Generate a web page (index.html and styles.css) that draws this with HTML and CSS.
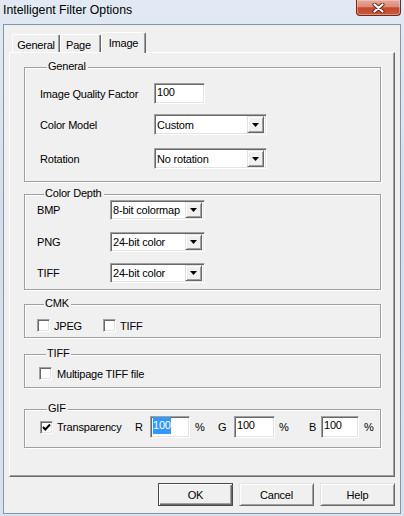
FILE: index.html
```html
<!DOCTYPE html>
<html lang="en">
<head>
  <meta charset="UTF-8" />
  <title>Intelligent Filter Options</title>
  <link rel="stylesheet" href="styles.css">
</head>
<body>
  <div class="window">
    <div class="titlebar">
      <span class="title">Intelligent Filter Options</span>
      <div class="close" aria-label="Close">
        <svg width="13" height="10" viewBox="0 0 13 10">
          <path d="M2.5 1.5 L10.5 8.5 M10.5 1.5 L2.5 8.5" stroke="#5a2418" stroke-width="4" stroke-linecap="round" fill="none"/>
          <path d="M2.5 1.5 L10.5 8.5 M10.5 1.5 L2.5 8.5" stroke="#fff" stroke-width="2.2" stroke-linecap="round" fill="none"/>
        </svg>
      </div>
    </div>

    <div class="client">
      <div class="tabs">
        <div class="tab tab-general">General</div>
        <div class="tab tab-page">Page</div>
        <div class="tab tab-image active">Image</div>
      </div>

      <div class="panel">
        <!-- General -->
        <div class="group g-general">
          <span class="group-title">General</span>
          <div class="row r-quality">
            <span class="lbl">Image Quality Factor</span>
            <div class="field w-quality"><span>100</span></div>
          </div>
          <div class="row r-model">
            <span class="lbl">Color Model</span>
            <div class="field select w-model">
              <span>Custom</span>
              <span class="drop"><svg width="7" height="4" viewBox="0 0 7 4"><path d="M0 0H7L3.5 4Z" fill="#000"/></svg></span>
            </div>
          </div>
          <div class="row r-rotation">
            <span class="lbl">Rotation</span>
            <div class="field select w-model">
              <span>No rotation</span>
              <span class="drop"><svg width="7" height="4" viewBox="0 0 7 4"><path d="M0 0H7L3.5 4Z" fill="#000"/></svg></span>
            </div>
          </div>
        </div>

        <!-- Color Depth -->
        <div class="group g-depth">
          <span class="group-title">Color Depth</span>
          <div class="row r-bmp">
            <span class="lbl">BMP</span>
            <div class="field select w-depth">
              <span>8-bit colormap</span>
              <span class="drop"><svg width="7" height="4" viewBox="0 0 7 4"><path d="M0 0H7L3.5 4Z" fill="#000"/></svg></span>
            </div>
          </div>
          <div class="row r-png">
            <span class="lbl">PNG</span>
            <div class="field select w-depth">
              <span>24-bit color</span>
              <span class="drop"><svg width="7" height="4" viewBox="0 0 7 4"><path d="M0 0H7L3.5 4Z" fill="#000"/></svg></span>
            </div>
          </div>
          <div class="row r-tiff">
            <span class="lbl">TIFF</span>
            <div class="field select w-depth">
              <span>24-bit color</span>
              <span class="drop"><svg width="7" height="4" viewBox="0 0 7 4"><path d="M0 0H7L3.5 4Z" fill="#000"/></svg></span>
            </div>
          </div>
        </div>

        <!-- CMK -->
        <div class="group g-cmk">
          <span class="group-title">CMK</span>
          <div class="row r-check">
            <label class="check-item jpeg"><span class="box"></span>JPEG</label>
            <label class="check-item"><span class="box"></span>TIFF</label>
          </div>
        </div>

        <!-- TIFF -->
        <div class="group g-tiff">
          <span class="group-title">TIFF</span>
          <div class="row r-check">
            <label class="check-item"><span class="box"></span>Multipage TIFF file</label>
          </div>
        </div>

        <!-- GIF -->
        <div class="group g-gif">
          <span class="group-title">GIF</span>
          <div class="row r-gif">
            <label class="check-item transp">
              <span class="box"><svg width="9" height="9" viewBox="0 0 9 9"><path d="M1 4 L3.3 6.5 L8 1.5" stroke="#000" stroke-width="2" fill="none"/></svg></span>Transparency
            </label>
            <span class="chan ch-r">R</span>
            <div class="field w-r"><span class="sel">100</span></div>
            <span class="pct p-r">%</span>
            <span class="chan ch-g">G</span>
            <div class="field w-g"><span>100</span></div>
            <span class="pct p-g">%</span>
            <span class="chan ch-b">B</span>
            <div class="field w-b"><span>100</span></div>
            <span class="pct p-b">%</span>
          </div>
        </div>
      </div>

      <div class="actions">
        <button class="btn default">OK</button>
        <button class="btn">Cancel</button>
        <button class="btn">Help</button>
      </div>
    </div>
  </div>
</body>
</html>
```

FILE: styles.css
```css
/* Base */
* {
  box-sizing: border-box;
}
body {
  margin: 0;
  width: 404px;
  height: 516px;
  overflow: hidden;
  font-family: 'Liberation Sans', Arial, sans-serif;
  font-size: 11px;
  letter-spacing: -0.2px;
  color: #000;
}

/* Window frame */
.window {
  width: 404px;
  height: 516px;
  padding: 0 3px 2px 3px;
  display: flex;
  flex-direction: column;
  background: linear-gradient(to bottom, #e1eaf4, #d3dfec 40%, #d7e2ee);
}
.titlebar {
  height: 24px;
  flex-shrink: 0;
  display: flex;
  justify-content: space-between;
  align-items: flex-start;
}
.title {
  font-size: 12.3px;
  line-height: 12px;
  letter-spacing: 0;
  margin-top: 4px;
  color: #000;
}
.close {
  width: 45px;
  height: 16px;
  border: 1px solid #6b2a1e;
  border-top: none;
  border-radius: 0 0 4px 4px;
  background: linear-gradient(to bottom, #e6a79a 0%, #d98c79 45%, #c4492c 52%, #c9573b 100%);
  box-shadow: inset 0 0 0 1px rgba(255, 220, 210, 0.45);
  display: flex;
  justify-content: center;
  align-items: center;
}

/* Client area */
.client {
  flex: 1;
  background: #f0f0f0;
  border: 1px solid #8795a6;
  padding: 7px 5px 0 5px;
  display: flex;
  flex-direction: column;
}

/* Tabs */
.tabs {
  height: 20px;
  flex-shrink: 0;
  display: flex;
  align-items: flex-end;
  padding-left: 3px;
  position: relative;
  z-index: 1;
}
.tab {
  height: 18px;
  border-top: 1px solid #fff;
  border-left: 1px solid #fff;
  border-right: 1px solid #696969;
  box-shadow: inset -1px 0 #a0a0a0;
  border-radius: 2px 2px 0 0;
  background: #f0f0f0;
  display: flex;
  justify-content: center;
  align-items: center;
  padding-top: 3px;
}
.tab-general { width: 48px; }
.tab-page { width: 41px; justify-content: flex-start; padding-left: 5px; }
.tab-image { width: 45px; }
.tab.active {
  height: 21px;
  margin-bottom: -1px;
  padding-top: 0;
}

/* Tab page */
.panel {
  height: 425px;
  flex-shrink: 0;
  border-top: 1px solid #fff;
  border-left: 1px solid #fff;
  border-right: 1px solid #696969;
  border-bottom: 1px solid #696969;
  box-shadow: inset -1px -1px #a0a0a0;
  padding: 0 13px 0 14px;
}

/* Group boxes */
.group {
  border: 1px solid #a0a0a0;
  box-shadow: inset 1px 1px #fff, 1px 1px #fff;
  display: flex;
  flex-direction: column;
}
.group-title {
  display: block;
  width: fit-content;
  margin: -8px 0 -2px 7px;
  padding: 0 2px 0 1px;
  line-height: 13px;
  background: #f0f0f0;
}
.g-general { margin-top: 14px; padding: 0 0 12px 15px; }
.g-depth { margin-top: 12px; padding: 0 0 6px 12px; }
.g-cmk { margin-top: 14px; padding: 0 0 4px 12px; }
.g-tiff { margin-top: 16px; padding: 0 0 6px 14px; }
.g-gif { margin-top: 21px; padding: 0 0 9px 15px; }

.row {
  display: flex;
  align-items: center;
}
.g-general .lbl { width: 114px; }
.g-depth .lbl { width: 73px; }

.r-quality { margin-top: 12px; }
.r-model { margin-top: 10px; }
.r-rotation { margin-top: 13px; }
.r-bmp { margin-top: 2px; }
.r-png { margin-top: 12px; }
.r-tiff { margin-top: 11px; }
.g-cmk .r-check { margin-top: 10px; height: 15px; }
.g-tiff .r-check { margin-top: 8px; height: 15px; }
.r-gif { margin-top: 3px; height: 22px; }

/* Sunken fields */
.field {
  height: 21px;
  background: #fff;
  border-top: 1px solid #a0a0a0;
  border-left: 1px solid #a0a0a0;
  border-bottom: 1px solid #fff;
  border-right: 1px solid #fff;
  box-shadow: inset 1px 1px #696969, inset -1px -1px #e3e3e3;
  padding: 1px 2px 0 2px;
  line-height: 14px;
  display: flex;
}
.field.select {
  align-items: center;
  padding: 0 2px 0 2px;
}
.w-quality { width: 51px; }
.w-model { width: 113px; }
.w-depth { width: 95px; height: 20px; }

.drop {
  margin-left: auto;
  width: 17px;
  height: 17px;
  background: #f0f0f0;
  border-top: 1px solid #e3e3e3;
  border-left: 1px solid #e3e3e3;
  border-right: 1px solid #696969;
  border-bottom: 1px solid #696969;
  box-shadow: inset 1px 1px #fff, inset -1px -1px #a0a0a0;
  display: flex;
  justify-content: center;
  align-items: center;
}
.w-depth .drop { height: 16px; }

/* Checkboxes */
.check-item {
  display: flex;
  align-items: center;
}
.box {
  width: 13px;
  height: 13px;
  margin-right: 4px;
  background: #fff;
  border-top: 1px solid #a0a0a0;
  border-left: 1px solid #a0a0a0;
  border-bottom: 1px solid #fff;
  border-right: 1px solid #fff;
  box-shadow: inset 1px 1px #696969, inset -1px -1px #e3e3e3;
  display: flex;
  justify-content: center;
  align-items: center;
}
.jpeg { width: 66px; }
.g-tiff .box { margin-right: 5px; }
.transp { width: 95px; }

/* GIF transparency colour */
.chan { display: block; }
.ch-r { width: 15px; }
.ch-g { width: 16px; }
.ch-b { width: 12px; }
.w-r { width: 40px; height: 22px; }
.w-g { width: 41px; height: 22px; }
.w-b { width: 38px; height: 22px; }
.pct { display: block; }
.p-r { margin-left: 5px; width: 23px; }
.p-g { margin-left: 4px; width: 30px; }
.p-b { margin-left: 5px; }
.sel {
  background: #3399ff;
  color: #fff;
  height: 17px;
  padding-top: 1px;
  margin-top: -1px;
}

/* Dialog buttons */
.actions {
  display: flex;
  justify-content: flex-end;
  gap: 6px;
  margin-top: 6px;
}
.btn {
  width: 75px;
  height: 23px;
  font-family: inherit;
  font-size: 11px;
  letter-spacing: inherit;
  color: #000;
  background: #f0f0f0;
  border-top: 1px solid #e3e3e3;
  border-left: 1px solid #e3e3e3;
  border-right: 1px solid #696969;
  border-bottom: 1px solid #696969;
  box-shadow: inset 1px 1px #fff, inset -1px -1px #a0a0a0;
  padding: 0;
}
.btn.default {
  border: 1px solid #4a4a4a;
  box-shadow: inset 1px 1px #fff, inset -1px -1px #696969, inset -2px -2px #a0a0a0;
}
```
